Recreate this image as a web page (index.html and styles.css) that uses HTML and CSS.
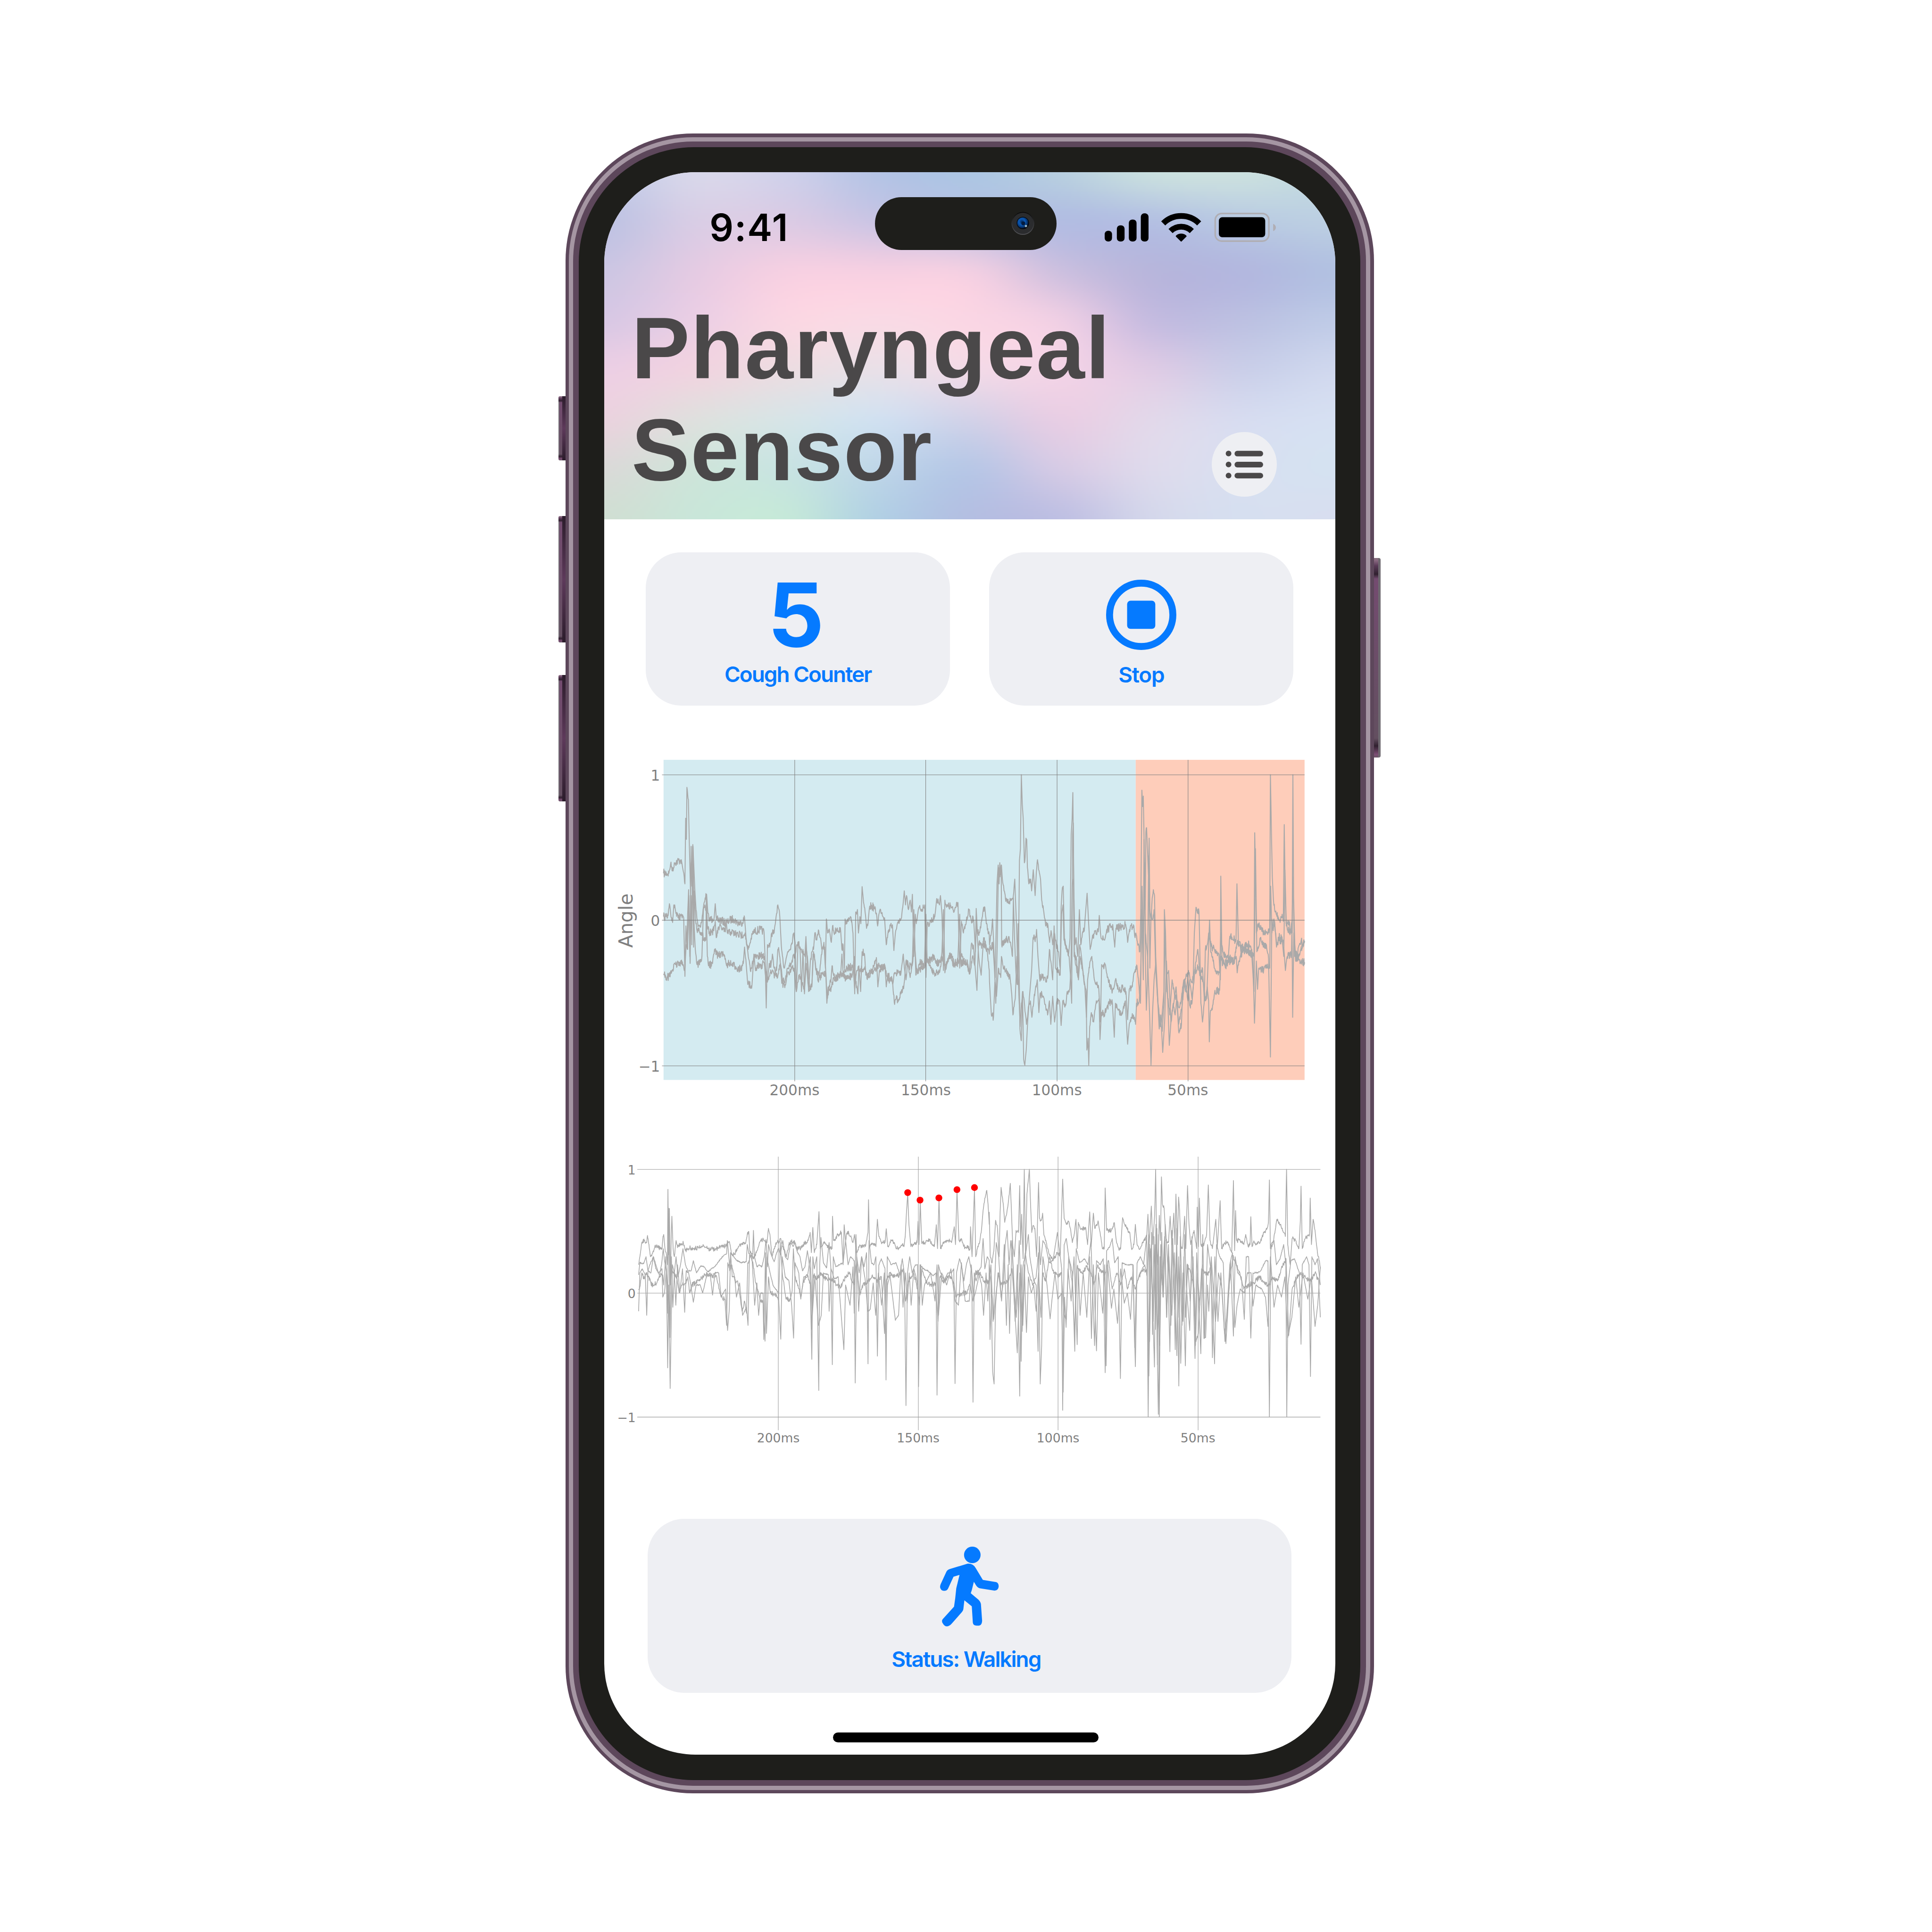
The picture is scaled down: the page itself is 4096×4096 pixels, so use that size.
FILE: index.html
```html
<!DOCTYPE html>
<html lang="en">
<head>
<meta charset="utf-8">
<title>Pharyngeal Sensor</title>
<link rel="stylesheet" href="styles.css">
</head>
<body>
<div class="phone">
  <span class="key key-mute"></span>
  <span class="key key-up"></span>
  <span class="key key-down"></span>
  <span class="key key-power"></span>
  <div class="rim-outer"><div class="rim-light"><div class="rim-inner"><div class="bezel">
    <main class="screen">
      <header class="header">
        <canvas class="header-mesh" id="mesh" width="380" height="182"></canvas>
        <div class="statusbar">
          <span class="time">9:41</span>
          <div class="island">
            <svg class="lens" viewBox="0 0 60 60">
              <defs>
                <linearGradient id="ring" x1="0" y1="0" x2="0" y2="1"><stop offset="0" stop-color="#060606"/><stop offset=".5" stop-color="#333436"/><stop offset="1" stop-color="#55565a"/></linearGradient>
                <radialGradient id="glass" cx=".42" cy=".4" r=".6"><stop offset="0" stop-color="#052a5c"/><stop offset=".45" stop-color="#0b5ab8"/><stop offset=".8" stop-color="#06346f"/><stop offset="1" stop-color="#020a18"/></radialGradient>
              </defs>
              <circle cx="30" cy="30" r="29.5" fill="url(#ring)"/>
              <circle cx="30" cy="30" r="27.5" fill="#2b2c2e"/>
              <circle cx="30" cy="29" r="16" fill="#02060c"/>
              <circle cx="30" cy="29" r="14.5" fill="url(#glass)"/>
              <circle cx="31" cy="30" r="5" fill="#031b3e"/>
              <circle cx="38" cy="37" r="3" fill="#9db6c4"/>
            </svg>
          </div>
          <svg class="indicators" viewBox="2859 548 448 80">
            <rect x="2859" y="597" width="19" height="28" rx="9"/>
            <rect x="2890.5" y="583" width="20" height="42" rx="9"/>
            <rect x="2921.5" y="568" width="20" height="57" rx="9"/>
            <rect x="2952.5" y="552" width="20" height="73" rx="9"/>
            <path d="M3010.5 578A66 66 0 0 1 3103.5 578" fill="none" stroke="#000" stroke-width="15"/>
            <path d="M3029.5 598A39 39 0 0 1 3084.5 598" fill="none" stroke="#000" stroke-width="15"/>
            <path d="M3057 623L3045 611A18 18 0 0 1 3069 611Z" stroke="#000" stroke-width="4" stroke-linejoin="round"/>
            <rect x="3145" y="552.5" width="139" height="71.5" rx="17" fill="none" stroke="#b0aeb4" stroke-width="4"/>
            <rect x="3154.5" y="562" width="120" height="52" rx="9"/>
            <path d="M3295 579q7 3 7 9.500t-7 9.500z" fill="#b0aeb4"/>
          </svg>
        </div>
        <div class="titlebar">
          <h1 class="title">Pharyngeal<br>Sensor</h1>
          <button class="menu" aria-label="Menu">
            <svg viewBox="0 0 168 168">
              <circle cx="43.500" cy="55.500" r="7.300"/><circle cx="43.500" cy="84" r="7.300"/><circle cx="43.500" cy="112.500" r="7.300"/>
              <rect x="59" y="48.500" width="74" height="14.500" rx="7.200"/><rect x="59" y="77" width="74" height="14.500" rx="7.200"/><rect x="59" y="105.500" width="74" height="14.500" rx="7.200"/>
            </svg>
          </button>
        </div>
      </header>

      <section class="cards">
        <div class="card">
          <span class="count">5</span>
          <span class="label">Cough Counter</span>
        </div>
        <div class="card card-stop">
          <svg class="stop" viewBox="0 0 182 182"><circle cx="91" cy="91" r="82" fill="none" stroke="#057aff" stroke-width="18"/><rect x="54.500" y="54.500" width="73" height="73" rx="9" fill="#057aff"/></svg>
          <span class="label">Stop</span>
        </div>
      </section>

      <svg class="chart chart-angle" viewBox="1563.5 1900 1892 960">
        <rect x="1717" y="1967" width="1222" height="828.500" fill="#d4ebf1"/>
        <rect x="2939" y="1967" width="437" height="828.500" fill="#fecdba"/>
        <g class="trace trace-angle" id="angle"></g>
        <g class="grid">
          <path d="M1713 2006H3376M1713 2382H3376M1713 2759H3376"/>
          <path d="M2056.500 1967V2799M2395.500 1967V2799M2735.500 1967V2799M3074.500 1967V2799"/>
        </g>
        <g class="tick tick-angle">
          <text x="1708" y="2020.500" text-anchor="end">1</text>
          <text x="1708" y="2396.500" text-anchor="end">0</text>
          <text x="1708" y="2773.500" text-anchor="end">−1</text>
          <g text-anchor="middle">
            <text x="2056" y="2834.500">200ms</text><text x="2396" y="2834.500">150ms</text>
            <text x="2735" y="2834.500">100ms</text><text x="3074" y="2834.500">50ms</text>
          </g>
          <text class="axis-title" transform="translate(1636.5 2383) rotate(-90)" text-anchor="middle">Angle</text>
        </g>
      </svg>

      <svg class="chart chart-cough" viewBox="1563.5 2940 1892 830">
        <g class="grid">
          <path d="M1649 3027H3417M1649 3347H3417M1649 3668H3417"/>
          <path d="M2014 2994V3702M2376.500 2994V3702M2738 2994V3702M3100.500 2994V3702"/>
        </g>
        <g class="trace trace-cough" id="cough"></g>
        <g fill="#ff0000">
          <circle cx="2348.900" cy="3087" r="8.800"/><circle cx="2380.800" cy="3106.500" r="8.800"/><circle cx="2429.600" cy="3100.700" r="8.800"/><circle cx="2476.400" cy="3079.300" r="8.800"/><circle cx="2521.700" cy="3074" r="8.800"/>
        </g>
        <g class="tick tick-cough">
          <text x="1645" y="3039.500" text-anchor="end">1</text>
          <text x="1645" y="3359.500" text-anchor="end">0</text>
          <text x="1645" y="3680.500" text-anchor="end">−1</text>
          <g text-anchor="middle">
            <text x="2014" y="3733">200ms</text><text x="2376" y="3733">150ms</text>
            <text x="2738" y="3733">100ms</text><text x="3100" y="3733">50ms</text>
          </g>
        </g>
      </svg>

      <section class="card status">
        <svg class="walker" viewBox="522 231 341 463" fill="#057aff">
          <circle cx="709" cy="279" r="48"/>
          <path d="M578 361L680 330Q712 327 728 354L770 424L848 437Q862 442 862 462Q860 484 838 486L756 473Q742 471 732 457L718 435L706 483L700 501L744 538Q757 551 759 564L766 662Q764 687 748 689H734Q714 688 712 671L706 577L663 542L657 594Q655 604 648 611L589 678Q576 693 560 693Q548 694 535 671Q531 659 538 651L603 579L610 530L616 472L635 395L600 405L569 473Q562 487 550 487Q526 489 522 466Q522 458 525 450L559 376Q564 366 578 361Z"/>
        </svg>
        <span class="label">Status: Walking</span>
      </section>

      <span class="home"></span>
    </main>
  </div></div></div></div>
</div>
<script src="charts.js"></script>
</body>
</html>
```
FILE: styles.css
```css
/* 1rem = 100 design units; the artboard is 50rem square */
html { font-size: 81.92px; }
* { box-sizing: border-box; }
body {
  margin: 0;
  width: 50rem;
  height: 50rem;
  overflow: hidden;
  background: #fff;
  padding: 3.46rem 0 0 14.633rem;
  font-family: Inter, "Liberation Sans", sans-serif;
}
svg { display: block; }

.phone { position: relative; width: 20.922rem; height: 42.955rem; }
.rim-outer, .rim-light, .rim-inner, .bezel { height: 100%; }
.rim-outer { background: #5d475b; padding: .09rem; border-radius: 3.3rem; position: relative; }
.rim-light { background: #a596a3; padding: .11rem; border-radius: 3.21rem; }
.rim-inner { background: #5d475b; padding: .145rem; border-radius: 3.1rem; }
.bezel { background: #1e1e1b; padding: .655rem; border-radius: 2.98rem; }
.screen {
  height: 100%;
  display: flex;
  flex-direction: column;
  overflow: hidden;
  border-radius: 2.36rem;
  background: #fff;
}

.key {
  position: absolute;
  left: -.18rem;
  width: .2rem;
  border-radius: .04rem 0 0 .04rem;
  background:
    linear-gradient(#9b7d92 0, #5a3a58 .06rem, #30202f .12rem, transparent .16rem, transparent calc(100% - .16rem), #30202f calc(100% - .1rem), #7d4f75 calc(100% - .04rem), #5f4f5d 100%) 0 0 / .1rem 100% no-repeat,
    linear-gradient(90deg, #746e76 .02rem, transparent .02rem) 0 0 / .1rem 100% no-repeat,
    linear-gradient(#744b70, #634f60) 0 0 / .1rem 100% no-repeat,
    linear-gradient(#2b1c2b, #5e3a5b 50%, #2b1c2b);
}
.key-mute { top: 6.8rem; height: 1.66rem; }
.key-up { top: 9.89rem; height: 3.27rem; }
.key-down { top: 14.01rem; height: 3.27rem; }
.key-power {
  left: auto;
  right: -.18rem;
  top: 10.985rem;
  height: 5.16rem;
  border-radius: 0 .05rem .05rem 0;
  background:
    linear-gradient(90deg, transparent .14rem, #6f6a71 .14rem),
    linear-gradient(#86707f 0, #8a6a82 .06rem, #5a3a58 .2rem, #30202f .42rem, #744b70 .54rem, #634f60 calc(100% - .5rem), #30202f calc(100% - .3rem), #7d4f75 calc(100% - .08rem), #6a5566 100%);
}

.header { position: relative; height: 8.985rem; flex: none; }
.header-mesh { position: absolute; inset: 0; width: 100%; height: 100%; }
.statusbar {
  position: relative;
  display: grid;
  grid-template-columns: 7.015rem 4.7rem 1fr;
  grid-template-rows: 1.37rem;
  padding-top: .64rem;
  height: 2.01rem;
}
.time {
  padding-left: 2.73rem;
  font-size: .97rem;
  font-weight: 600;
  line-height: 1.57rem;
  letter-spacing: .024rem;
  color: #000;
}
.island {
  display: flex;
  align-items: center;
  justify-content: flex-end;
  padding-right: .57rem;
  border-radius: .685rem;
  background: #1e1e1b;
}
.lens { width: .6rem; height: .6rem; }
.indicators { width: 4.48rem; height: .8rem; margin: .38rem 0 0 1.245rem; }
.titlebar {
  position: relative;
  display: flex;
  justify-content: space-between;
  align-items: flex-end;
  margin-top: 1.22rem;
  padding: 0 1.51rem 0 .71rem;
}
.title {
  margin: 0;
  font: bold 2.26rem/2.64rem "Liberation Sans", Arial, sans-serif;
  letter-spacing: .022rem;
  color: #4a4849;
}
.menu {
  width: 1.68rem;
  height: 1.68rem;
  margin: 0 0 .11rem;
  padding: 0;
  border: 0;
  border-radius: 50%;
  background: #eeeff3;
  fill: #4a4849;
}

.cards { display: flex; gap: 1.015rem; padding: .855rem 1.08rem 0; flex: none; }
.card {
  flex: 1;
  display: flex;
  flex-direction: column;
  align-items: center;
  height: 3.96rem;
  padding-top: .77rem;
  border-radius: .92rem;
  background: #eeeff3;
  color: #057aff;
}
.count { font-size: 2.29rem; line-height: 1.69rem; font-weight: 700; margin-right: .1rem; }
.label { margin-top: .34rem; font-size: .56rem; line-height: .7rem; font-weight: 600; white-space: nowrap; letter-spacing: -.024rem; }
.card-stop { padding-top: .7rem; }
.stop { width: 1.818rem; height: 1.818rem; }
.card-stop .label { margin-top: .3rem; letter-spacing: -.015rem; }

.chart { width: 18.92rem; flex: none; }
.chart-angle { height: 9.6rem; margin-top: .74rem; }
.chart-cough { height: 8.3rem; margin-top: .8rem; }
.grid path { fill: none; stroke: #808080; stroke-width: 1.3; }
.chart-cough .grid path { stroke: #9c9c9c; }
.trace path { fill: none; stroke: #a9a9a9; stroke-linejoin: round; }
.trace-angle path { stroke-width: 2.5; }
.trace-cough path { stroke-width: 2; }
.tick { font-family: "DejaVu Sans", sans-serif; fill: #7f7f7f; }
.tick-angle { font-size: 38px; }
.tick-cough { font-size: 32.5px; }
.axis-title { font-size: 49.5px; }

.status { flex: none; height: 4.5rem; margin: 1.61rem 1.13rem 0; padding-top: .72rem; border-radius: .95rem; }
.walker { width: 1.522rem; height: 2.067rem; }
.status .label { margin: .5rem .18rem 0 0; }
.home { flex: none; align-self: center; width: 6.88rem; height: .255rem; margin: 1.025rem .2rem 0 0; border-radius: .13rem; background: #000; }
```
FILE: charts.js
```js
// Header mesh: a coarse colour lattice, blended smoothly between nodes
const LATTICE = [
  "c2cbe8 d8d7ea cfd0ea b5c4e5 adc6e3 b8cfe0 c9dfdf cbe0df c0d8e0",
  "bfc3e3 d9cde5 dccbe4 cbc5e4 bdc3e4 b3bde2 b4c0e2 b9cae2 bccfe2",
  "cdc6e3 e5cbe3 f6d0e2 f6d0e2 f2cfe2 cdc0df b8b6dc b3b8df b2c1e1",
  "d9c8e4 ebcfe4 fad7e3 f9dae5 fad6e4 efcfe4 c6bce0 bdc1e2 bfcbe7",
  "eccfe4 f0d4e0 ecdde2 e9e0e8 f2dae7 f2d3e6 dfcce5 cbcfe9 d0d8ee",
  "ead3de dfe0de d7e4e7 d1e0f0 d3d2e8 e8cee4 e2d8ea d7dcf0 d6e0f2",
  "dadad8 cfe4da c8e3e2 bfd6e8 b8c7e6 d6cbe5 dedaec d8dff0 d5e2f1",
  "d0dfd3 c9e6d9 c5e8d9 b2d0e4 b4bfe2 bfc0e3 d4d7eb d6dff0 d8def0",
].map(r => r.split(" ").map(h => [0, 2, 4].map(i => parseInt(h.substr(i, 2), 16))));

function spline(a, b, c, d, t) {
  return b + 0.5 * t * (c - a + t * (2 * a - 5 * b + 4 * c - d + t * (3 * (b - c) + d - a)));
}
function drawMesh(canvas) {
  const ctx = canvas.getContext("2d");
  const { width: w, height: h } = canvas;
  const img = ctx.createImageData(w, h);
  const rows = LATTICE.length, cols = LATTICE[0].length;
  const at = (r, c, k) => LATTICE[Math.max(0, Math.min(rows - 1, r))][Math.max(0, Math.min(cols - 1, c))][k];
  for (let y = 0; y < h; y++) {
    const fy = y / (h - 1) * (rows - 1), r = Math.min(rows - 2, Math.floor(fy)), ty = fy - r;
    for (let x = 0; x < w; x++) {
      const fx = x / (w - 1) * (cols - 1), c = Math.min(cols - 2, Math.floor(fx)), tx = fx - c;
      const o = (y * w + x) * 4;
      for (let k = 0; k < 3; k++) {
        const v = [-1, 0, 1, 2].map(d => spline(at(r + d, c - 1, k), at(r + d, c, k), at(r + d, c + 1, k), at(r + d, c + 2, k), tx));
        img.data[o + k] = spline(v[0], v[1], v[2], v[3], ty);
      }
      img.data[o + 3] = 255;
    }
  }
  ctx.putImageData(img, 0, 0);
}

const ANGLE = [
  ["246,545 268,545 275,505 285,535 290,500 315,488 322,510 330,560 333,590 336,310 339,400 341,178 347,230 351,430 356,640 358,430 361,600 365,422 369,510 373,610 378,700 385,760 395,770 402,745 408,690 415,650 421,635 426,715 432,745 445,740 452,730 456,675 461,745 480,745 500,760 515,745 530,740 545,755 562,760 575,735 583,850 590,870 600,830 610,795 640,785 654,795 658,900 663,1120 668,850 677,860 685,800 695,800 703,730 710,680 718,730 724,850 735,950 742,920 750,880 765,850 775,800 780,840 785,1050 792,840 800,860 812,880 820,900 824,815 830,950 835,1050 842,920 850,880 855,870 860,800 868,830 876,790 882,820 890,870 897,840 903,950 907,740 912,800 920,790 927,840 932,770 938,800 950,780 965,790 970,870 975,850 980,950 983,740 990,760 1000,740 1010,750 1015,800 1022,1060 1026,710 1033,700 1037,800 1043,730 1047,760 1052,602 1058,670 1064,710 1070,780 1076,760 1083,685 1100,690 1110,715 1115,770 1120,720 1127,700 1143,735 1150,850 1158,790 1175,765 1181,875 1187,800 1195,760 1210,740 1217,690 1223,620 1228,680 1232,640 1240,700 1247,660 1252,710 1256,635 1262,900 1268,720 1272,760 1283,690 1295,700 1306,680 1311,990 1316,770 1330,750 1347,730 1353,670 1360,655 1366,680 1370,640 1376,720 1382,960 1388,660 1395,690 1410,685 1425,710 1435,670 1441,670 1448,950 1455,750 1463,800 1475,750 1485,700 1495,745 1505,745 1512,880 1515,695 1520,800 1530,790 1537,750 1545,690 1550,690 1556,760 1568,810",
   "100,850 108,800 113,740 118,850 124,990 128,800 132,590 137,510 141,590 144,500 148,550 151,510 155,570 162,620 170,665 185,665 197,655 202,640 208,570 213,710 218,850 221,1020 224,900 228,490 232,440 236,124 240,250 244,310 249,500 252,480 256,395 259,400 262,520 268,590 276,570 280,620 287,530 295,640 300,540 305,487 310,530 318,570 323,660 332,710 340,770 350,770 357,840 363,790 370,850 377,800 385,850 395,880 402,950 406,690 410,620 415,600 420,830 430,870 438,890 444,820 449,380 453,310 456,200 460,600 465,850 470,820 477,900 484,700 490,850 497,800 505,790 509,730 517,630 523,750 530,870 540,810 555,805 565,795 569,725 574,800 580,825 592,830 600,790 620,770 628,780 635,860 640,780 660,775 680,765 685,780 690,840 698,785 715,765 722,820 725,800 735,850 742,880 746,720 751,190 754,260 757,215 762,500 765,700 768,370 771,350 775,450 779,550 782,395 785,700 790,740 795,650 800,615 805,640 810,900 820,1100 828,1200 835,1180 845,1050 847,700 852,800 857,1050 863,1080 870,1150 880,1000 890,1060 900,1080 910,1120 920,1080 930,1000 940,1050 950,960 960,1000 970,1000 975,800 982,690 988,715 995,710 999,900 1003,1100 1010,1180 1017,1100 1022,870 1030,850 1036,800 1042,830 1050,860 1060,870 1072,880 1080,890 1086,1000 1088,557 1092,850 1100,890 1120,910 1125,830 1130,810 1140,830 1153,830 1157,590 1163,830 1175,860 1190,850 1210,850 1220,870 1230,900 1233,372 1237,600 1240,800 1247,760 1260,785 1275,805 1290,795 1297,780 1300,124 1304,360 1308,560 1313,660 1320,710 1335,735 1343,745 1350,720 1355,750 1359,337 1363,620 1367,760 1380,750 1388,800 1393,800 1396,124 1399,650 1405,880 1415,900 1420,860 1430,840 1446,840"],
  ["246,730 265,725 270,675 275,715 283,755 288,680 295,705 305,735 320,725 328,735 333,985 337,770 341,860 344,720 348,615 351,760 354,930 358,640 361,850 364,430 368,860 371,620 376,740 382,790 390,780 400,810 412,820 418,830 420,640 424,770 432,795 450,790 456,750 460,820 470,775 485,780 497,795 500,740 505,800 520,795 540,805 560,810 577,800 583,840 590,900 600,965 612,905 640,900 656,900 661,960 668,1010 675,930 683,930 688,890 695,950 705,960 710,870 715,880 722,940 730,1010 740,1000 750,950 765,930 775,890 780,900 787,850 793,840 800,860 806,1050 812,870 818,1060 824,860 830,900 838,1020 848,1030 853,890 858,890 866,960 875,1010 885,910 893,860 900,860 905,980 909,1100 914,1030 925,1010 930,940 940,990 955,975 965,980 970,890 975,970 985,1000 1000,985 1012,980 1020,900 1025,1000 1035,1060 1039,940 1046,1050 1052,880 1062,890 1067,980 1078,990 1090,970 1100,940 1110,905 1116,1030 1122,960 1135,945 1145,940 1150,1030 1155,990 1170,990 1178,1010 1183,970 1195,975 1210,970 1219,890 1225,960 1230,1000 1237,920 1247,990 1256,920 1262,700 1270,980 1285,930 1305,930 1311,720 1316,920 1330,915 1345,900 1352,930 1370,925 1376,880 1382,700 1388,970 1397,920 1412,890 1420,940 1440,930 1448,720 1453,930 1470,920 1480,930 1487,975 1495,850 1505,870 1518,1045 1524,850 1540,850 1555,850 1568,890",
   "100,870 115,850 122,970 127,1100 133,850 138,520 145,560 150,510 152,850 165,835 180,825 190,840 198,900 202,650 207,820 213,970 218,1020 222,760 226,900 230,1210 236,1260 241,1050 246,1340 251,1364 257,1300 263,1180 270,1080 280,960 286,820 298,820 301,785 307,900 314,990 330,990 342,1010 350,980 356,870 362,920 370,1000 376,770 382,950 392,960 402,980 408,720 414,680 418,830 425,850 440,900 447,1000 451,1100 455,380 458,330 462,900 470,940 478,990 485,850 495,920 505,1020 513,1050 516,1300 521,1250 524,1364 528,1200 535,1140 545,1180 555,1100 568,1080 572,1255 578,1140 590,1150 600,1120 612,1100 625,1100 633,1245 638,1100 650,1130 665,1150 680,1090 690,1275 697,1190 705,1160 715,1150 724,1190 728,1100 740,1090 746,960 752,600 757,900 762,500 766,900 770,1130 775,1000 780,470 785,950 790,720 797,740 803,700 810,960 818,1080 825,1210 832,1150 840,1310 848,1180 856,920 862,1100 868,1280 875,1180 885,1100 893,1150 900,1080 908,1220 920,1190 926,1030 935,1000 945,970 955,1110 965,1100 975,970 990,870 1000,980 1010,950 1018,1090 1028,1080 1040,745 1045,880 1055,920 1068,970 1083,965 1088,800 1095,940 1115,935 1125,900 1140,930 1155,910 1158,970 1165,920 1180,880 1200,880 1220,890 1230,1050 1236,440 1242,880 1250,860 1257,820 1265,850 1283,850 1292,910 1300,1330 1306,740 1312,790 1318,750 1326,860 1335,820 1350,820 1357,900 1362,530 1368,770 1385,800 1392,750 1395,1160 1400,800 1408,900 1420,910 1425,920 1446,925"],
  ["246,975 262,990 270,985 280,960 295,935 315,925 333,950 338,850 344,870 349,640 353,900 357,500 362,560 366,430 370,760 375,870 382,935 395,925 402,900 408,700 414,680 420,720 424,900 430,940 445,930 453,870 462,890 490,890 500,930 520,935 540,945 560,955 570,930 575,860 582,940 588,1020 605,1025 613,890 618,945 640,940 655,930 663,1010 670,990 680,970 700,980 710,985 720,930 726,1015 740,1020 750,970 775,950 785,1050 795,980 805,1000 818,1050 825,930 835,1040 848,1030 855,880 865,960 880,990 895,980 905,970 910,1080 918,1040 925,1050 930,1010 950,990 965,975 980,970 990,950 1015,945 1022,1040 1030,960 1045,960 1060,950 1075,980 1100,960 1115,940 1145,950 1155,1000 1175,1010 1184,1105 1190,1080 1197,1085 1210,1060 1222,1020 1230,920 1240,940 1255,940 1265,850 1273,960 1290,950 1305,950 1318,910 1330,950 1350,975 1368,960 1376,900 1390,950 1400,910 1415,890 1425,930 1445,920 1455,900 1475,930 1490,970 1500,900 1510,930 1515,750 1525,900 1535,980 1545,820 1560,880 1568,960",
   "100,1010 108,1150 117,1160 123,1010 130,1070 138,950 148,990 151,900 158,940 170,960 188,990 195,1060 200,1150 210,1080 217,900 223,1000 231,1200 236,1100 243,1050 250,1110 258,1190 268,1110 275,1090 281,1160 290,1080 304,1000 311,1140 316,1060 330,1070 343,1130 350,1140 356,1090 362,1190 370,1070 378,1180 388,1090 400,1100 406,1195 413,1090 425,1110 432,1050 443,1040 448,950 453,600 458,570 462,900 470,900 480,1000 487,900 498,960 507,1020 514,1160 519,1000 530,920 537,900 548,1000 567,1040 574,1180 579,935 596,940 600,970 610,1010 622,1040 630,1040 638,1000 650,1040 670,1035 683,1050 690,1170 697,1040 710,1030 718,970 730,940 745,1100 750,700 757,1000 760,400 766,800 775,900 784,1150 790,1364 796,1150 803,1000 810,930 818,1080 828,1170 838,1220 845,1100 850,780 855,1000 865,960 875,1180 885,1110 897,1030 908,1190 920,1130 935,1000 948,1090 955,1000 965,1080 978,960 990,950 1003,980 1012,1000 1022,1090 1030,1030 1036,1090 1039,1265 1043,1140 1053,1110 1063,1045 1083,1045 1088,900 1105,930 1125,920 1145,920 1158,840 1175,870 1200,870 1225,900 1232,1185 1240,920 1245,1040 1250,950 1265,960 1280,950 1297,950 1301,600 1306,800 1315,740 1327,850 1340,830 1355,830 1364,960 1372,900 1390,890 1396,560 1403,900 1412,920 1430,870 1446,835"],
];

const COUGH = [
  ["145,600 150,560 158,490 168,480 178,490 181,455 187,500 193,560 200,545 210,515 220,505 232,520 240,520 244,460 247,450 252,520 258,550 262,600 264,227 267,550 270,322 274,700 277,480 280,360 285,520 290,560 297,480 303,515 315,495 327,495 335,530 345,522 355,515 370,520 390,515 405,510 412,510 425,520 445,522 465,520 480,508 500,508 508,485 515,495 523,550 535,545 550,510 565,500 580,490 587,440 592,435 596,530 605,560 615,560 625,530 635,490 645,475 655,480 660,490 667,480 672,420 678,450 686,560 695,520 705,490 715,485 722,470 730,510 745,560 755,500 765,487 778,485 785,520 800,520 812,500 825,488 833,480 841,440 846,540 852,415 858,540 868,500 877,337 882,520 895,490 910,505 920,515 930,520 932,360 936,480 945,468 955,450 968,440 975,600 979,402 985,480 990,442 998,445 1005,460 1015,490 1021,450 1028,540 1035,525 1045,505 1065,510 1076,440 1078,278 1082,505 1095,495 1108,510 1114,375 1120,460 1128,485 1145,490 1150,422 1156,510 1170,480 1183,490 1190,520 1200,515 1215,500 1222,510 1227,460 1232,340 1237,250 1242,400 1250,510 1262,498 1275,490 1279,385 1283,500 1288,290 1294,495 1310,490 1325,475 1335,500 1345,510 1353,402 1358,520 1364,275 1370,520 1385,490 1400,478 1415,490 1426,412 1431,500 1437,235 1445,480 1455,470 1465,510 1480,515 1490,520 1492,412 1498,560 1508,225 1513,560 1520,520 1530,480 1537,420 1543,330 1550,270 1558,232 1563,300 1568,400",
   "96,340 100,560 108,590 115,530 122,380 130,420 137,560 141,340 145,217 149,260 154,300 160,390 168,350 174,300 179,250 183,197 188,340 193,500 200,560 207,430 217,440 222,208 226,500 230,350 236,570 241,128 246,560 252,250 257,190 262,128 267,300 272,440 278,405 285,420 292,560 300,193 304,370 312,380 317,345 322,450 332,490 342,540 352,570 365,570 378,540 390,550 400,176 406,370 415,400 425,385 432,420 440,490 447,455 455,375 460,520 465,390 475,425 495,415 503,500 512,338 518,510 527,345 533,420 540,400 548,390 555,440 563,510 572,520 576,220 582,430 592,430 602,430 614,392 622,480 632,520 640,520 648,367 656,400 665,420 678,440 685,520 695,500 701,400 708,500 720,520 735,480 748,460 753,350 758,500 767,310 773,500 781,350 785,128 789,480 795,600 800,355 805,480 809,165 813,300 820,320 828,480 838,490 845,360 852,500 860,345 865,500 869,250 875,500 880,265 884,330 890,520 897,510 905,360 910,520 917,208 923,400 930,500 944,430 955,520 957,315 962,510 966,270 972,500 985,500 996,450 1003,205 1010,480 1020,520 1034,375 1040,520 1052,283 1058,520 1070,490 1085,490 1100,540 1107,183 1112,530 1116,332 1120,480 1135,480 1150,500 1158,450 1168,510 1176,500 1179,362 1184,510 1190,490 1215,495 1230,450 1245,425 1252,390 1256,180 1260,520 1270,500 1280,430 1287,375 1300,400 1315,440 1322,460 1327,128 1332,500 1342,600 1350,470 1365,480 1378,520 1384,385 1387,211 1392,520 1405,470 1422,450 1425,270 1430,500 1437,375 1445,430 1455,540 1463,580 1467,620"],
  ["145,650 150,590 165,595 175,560 183,630 195,640 205,560 215,620 230,650 238,600 245,520 250,580 258,640 263,1110 267,700 273,1212 277,900 282,600 290,640 297,560 305,660 315,600 325,520 335,600 345,630 358,630 367,580 380,640 397,605 410,610 427,635 440,620 458,605 475,575 490,555 502,545 505,480 515,610 520,540 527,550 540,575 560,590 582,585 586,500 592,545 600,540 608,550 611,430 615,560 625,610 635,600 645,610 655,560 662,475 668,610 672,500 680,540 695,585 705,540 713,518 720,550 730,480 740,560 750,575 762,490 772,510 780,490 790,540 800,560 810,630 820,610 830,530 840,620 848,1068 852,560 858,620 868,560 876,1222 880,600 885,465 895,590 908,615 918,490 925,610 931,1094 935,560 945,610 960,600 975,590 985,480 995,600 1005,560 1020,580 1024,1185 1030,560 1040,640 1050,560 1060,610 1070,540 1076,1090 1080,480 1090,590 1100,600 1108,560 1114,1052 1120,600 1130,570 1145,620 1149,1170 1154,560 1170,600 1190,590 1205,650 1215,570 1224,650 1230,1297 1236,640 1245,560 1255,640 1268,600 1277,600 1281,1203 1287,600 1300,620 1320,630 1340,655 1352,640 1356,1245 1362,600 1370,640 1385,680 1400,640 1415,640 1424,620 1429,1188 1435,640 1447,570 1455,600 1465,680 1475,600 1485,560 1497,640 1502,1280 1507,640 1515,680 1525,630 1535,610 1543,470 1550,620 1560,560 1568,580",
   "96,700 103,600 112,880 118,700 125,490 135,560 145,760 155,680 162,500 170,430 178,600 185,480 192,560 203,880 212,600 218,940 222,1250 228,600 235,900 245,560 258,450 264,560 280,680 290,700 298,1028 303,460 308,600 318,480 328,500 345,590 360,580 378,440 388,540 396,620 400,1320 406,500 415,470 425,560 440,640 450,1028 456,520 470,590 490,570 505,600 517,480 532,1000 540,580 555,600 568,570 576,1134 582,530 595,510 605,470 615,590 630,560 639,1163 646,590 660,600 678,600 690,600 701,1104 708,590 722,560 735,600 748,460 754,1354 760,500 770,700 780,1106 786,400 792,1095 797,450 800,1354 806,500 815,760 825,400 835,600 844,1030 852,430 860,650 866,1020 872,420 881,1200 887,460 898,880 905,450 912,700 926,925 935,460 948,1064 955,540 972,1040 980,450 988,960 1000,500 1015,640 1029,1090 1037,500 1050,560 1065,590 1076,990 1085,800 1095,580 1107,953 1114,560 1125,640 1140,660 1152,870 1160,560 1170,560 1179,963 1188,640 1205,640 1220,630 1240,580 1250,580 1256,1354 1262,500 1275,480 1285,600 1300,570 1315,500 1324,600 1328,1354 1333,700 1345,580 1360,570 1380,640 1387,993 1392,600 1410,560 1420,600 1426,1153 1432,560 1445,600 1455,570 1467,700"],
  ["145,720 150,710 158,640 167,670 175,640 185,660 195,690 205,705 220,685 232,655 243,650 247,700 255,560 260,680 267,800 275,600 285,640 300,660 310,740 320,700 335,690 345,660 352,740 362,700 375,690 390,680 400,665 415,650 430,645 445,655 460,655 472,720 480,760 495,770 502,900 507,590 515,630 522,600 530,640 540,690 548,690 557,760 565,830 575,780 583,840 588,590 600,560 610,600 620,690 628,720 637,770 650,780 653,970 660,540 664,940 672,660 680,740 700,745 713,770 720,490 728,640 742,760 758,780 768,730 773,520 780,660 792,700 803,760 812,690 830,650 843,700 847,920 855,650 870,670 885,640 905,670 930,670 950,700 965,710 985,660 1000,640 1018,700 1030,590 1042,750 1055,700 1075,680 1095,660 1110,680 1130,660 1143,940 1150,680 1165,640 1185,660 1205,650 1218,620 1228,780 1240,680 1260,640 1272,690 1284,780 1295,620 1310,680 1330,700 1350,690 1360,880 1367,660 1385,690 1405,650 1425,690 1432,760 1440,750 1460,740 1475,740 1490,700 1502,780 1512,640 1530,640 1545,680 1568,690",
   "96,600 103,690 110,1130 116,1190 122,800 132,640 145,700 160,690 175,680 190,620 198,750 212,1036 222,640 228,1078 234,620 245,540 258,640 275,700 290,660 300,540 307,1190 313,1000 317,640 330,680 345,560 360,630 380,660 395,640 405,840 415,870 425,560 440,700 450,940 460,610 480,640 500,610 517,640 530,700 545,600 560,640 576,640 590,580 605,720 625,640 640,700 655,620 668,720 685,660 700,720 715,660 735,620 750,640 757,1150 765,520 775,880 783,500 790,900 796,1340 803,560 812,700 822,460 830,860 840,560 852,850 862,540 873,1050 880,560 889,1088 898,640 908,1100 915,600 930,640 945,720 952,980 962,940 975,620 990,640 1005,640 1015,600 1020,1060 1030,560 1043,880 1055,640 1070,940 1080,860 1090,700 1105,560 1120,600 1135,650 1150,720 1170,700 1190,690 1215,660 1235,690 1255,700 1270,660 1290,680 1305,620 1325,570 1336,950 1350,720 1370,660 1385,640 1400,660 1425,680 1445,640 1460,680 1467,860"],
  ["145,830 150,640 160,620 172,650 178,850 183,630 190,600 205,560 225,640 240,620 243,760 250,740 258,620 262,840 268,320 272,960 278,560 284,810 290,640 296,800 303,600 312,740 323,620 332,835 338,630 348,640 357,700 367,785 378,700 395,700 405,740 420,660 435,640 445,750 455,640 470,640 480,760 498,720 506,925 513,820 518,540 525,660 535,660 542,760 555,690 567,850 583,810 589,900 595,550 605,560 616,800 625,690 632,850 640,740 650,740 658,978 665,560 675,620 690,700 712,738 722,968 728,560 740,660 755,680 766,800 774,963 780,590 795,640 803,770 815,660 830,660 842,560 850,850 860,660 875,900 886,850 895,640 915,650 918,830 926,620 940,670 955,660 966,830 978,1020 985,700 1003,800 1015,610 1020,840 1027,450 1038,830 1050,560 1065,680 1075,830 1085,820 1097,690 1107,850 1118,640 1131,800 1142,640 1148,1000 1155,700 1165,650 1187,875 1200,850 1210,600 1218,810 1228,640 1235,790 1243,640 1251,800 1262,620 1275,680 1285,800 1290,600 1296,800 1305,700 1330,640 1348,780 1356,600 1362,850 1375,640 1395,700 1412,620 1430,780 1443,800 1455,590 1470,780 1487,780 1495,600 1505,770 1515,720 1527,650 1537,700 1545,850 1555,640 1562,780 1568,640",
   "96,700 99,970 106,720 114,870 124,740 135,640 147,780 158,500 167,900 174,600 180,940 190,480 200,740 208,860 220,480 232,930 241,600 250,935 258,660 270,740 280,700 290,830 300,640 310,860 318,560 335,700 348,868 355,780 368,640 380,770 395,740 402,1230 408,760 414,910 422,620 435,780 447,560 460,995 465,620 472,850 485,640 500,860 512,560 519,965 527,600 540,1026 548,640 566,840 574,600 580,1100 586,600 602,815 612,720 627,890 640,620 655,790 668,740 681,870 692,600 698,1010 705,700 720,640 740,600 750,660 756,450 760,980 768,440 772,945 778,460 784,920 790,420 795,860 802,1000 810,440 817,760 824,480 831,860 838,500 848,900 856,470 863,820 870,540 878,860 886,600 894,900 902,560 908,860 918,600 928,780 940,560 950,1000 958,640 968,800 978,600 985,965 992,960 1000,700 1005,830 1015,560 1025,740 1033,880 1045,640 1060,720 1072,980 1082,800 1092,600 1103,540 1113,910 1122,800 1135,720 1152,740 1165,640 1180,640 1188,805 1200,700 1225,720 1240,760 1250,905 1260,560 1275,810 1290,700 1306,760 1320,660 1332,960 1349,860 1365,660 1378,810 1395,640 1415,770 1430,660 1445,905 1456,800 1467,610"],
];

let seed = 7;
const rand = () => ((seed = (seed * 16807) % 2147483647) / 2147483647) * 2 - 1;

// Fills in the fine sensor jitter between samples; fast swings stay clean
function toPath(channel, blocks, top, ky, jitter, step) {
  const pts = [];
  channel.forEach((text, i) => text.split(" ").forEach(p => {
    const [x, y] = p.split(",").map(Number);
    pts.push([blocks[i][0] + x / blocks[i][1], top + y / ky]);
  }));
  let d = "M" + pts[0].join(" ");
  for (let i = 1; i < pts.length; i++) {
    const [x0, y0] = pts[i - 1], [x1, y1] = pts[i];
    const n = Math.max(1, Math.floor((x1 - x0) / step));
    const slope = Math.abs(y1 - y0) / Math.max(1, x1 - x0);
    const amp = slope > 12 ? 0 : jitter / (1 + slope / 8);
    for (let k = 1; k < n; k++) {
      const t = k / n;
      d += "L" + (x0 + (x1 - x0) * t).toFixed(1) + " " + (y0 + (y1 - y0) * t + rand() * amp).toFixed(1);
    }
    d += "L" + x1.toFixed(1) + " " + y1.toFixed(1);
  }
  return d;
}
function drawTraces(id, channels, ...args) {
  const group = document.getElementById(id);
  channels.forEach((channel, i) => {
    const path = document.createElementNS("http://www.w3.org/2000/svg", "path");
    const opts = args.slice();
    if (Array.isArray(opts[3])) opts[3] = opts[3][i];
    path.setAttribute("d", toPath(channel, ...opts));
    group.appendChild(path);
  });
}

drawMesh(document.getElementById("mesh"));
drawTraces("angle", ANGLE, [[1560, 1.568], [2500, 1.6505]], 1930.5, 1.6505, 11, 0.9);
drawTraces("cough", COUGH, [[1560, 1.568], [2500, 1.6]], 2960, 1.912, [6, 2, 7, 2], 0.9);
```
